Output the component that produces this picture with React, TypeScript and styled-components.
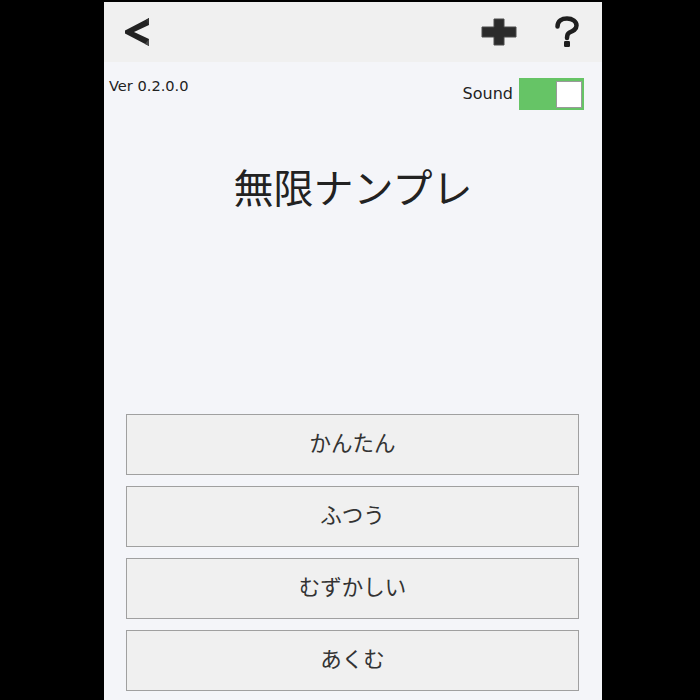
import React, { useState } from "react";
import styled, { createGlobalStyle } from "styled-components";

const Global = createGlobalStyle`
  html, body { margin: 0; padding: 0; background: #000; }
  body { font-family: "DejaVu Sans", "Noto Sans CJK JP", sans-serif; }
`;

const Screen = styled.div`
  width: 700px;
  height: 700px;
  background: #000;
  display: flex;
  justify-content: center;
  padding-top: 2px;
  box-sizing: border-box;
  overflow: hidden;
`;

const Column = styled.div`
  width: 498px;
  background: #f4f5f9;
  display: flex;
  flex-direction: column;
  margin-left: 6px;
`;

const Header = styled.header`
  height: 60px;
  background: #f0f0f0;
  display: flex;
  align-items: center;
  padding: 0 22px 0 20px;
`;

const IconButton = styled.button<{ $gap?: number }>`
  border: none;
  background: transparent;
  padding: 0;
  margin-right: ${(p) => p.$gap ?? 0}px;
  display: flex;
  align-items: center;
  justify-content: center;
  cursor: pointer;
`;

const Spacer = styled.div`
  flex: 1;
`;

const TopRow = styled.div`
  display: flex;
  justify-content: space-between;
  align-items: flex-start;
  padding: 13px 18px 0 5px;
`;

const Version = styled.div`
  font-family: "DejaVu Sans", sans-serif;
  font-size: 14.6px;
  color: #222;
  margin-top: 2px;
`;

const SoundBox = styled.div`
  display: flex;
  align-items: center;
  gap: 6px;
  margin-top: 3px;
`;

const SoundLabel = styled.span`
  font-family: "DejaVu Sans", sans-serif;
  font-size: 16px;
  color: #222;
  margin-top: -2px;
`;

const Toggle = styled.div<{ $on: boolean }>`
  width: 65px;
  height: 32px;
  box-sizing: border-box;
  background: ${(p) => (p.$on ? "#66c466" : "#ccc")};
  display: flex;
  align-items: center;
  justify-content: ${(p) => (p.$on ? "flex-end" : "flex-start")};
  padding: 3px 2px;
  cursor: pointer;
`;

const Knob = styled.div`
  width: 26px;
  height: 27px;
  box-sizing: border-box;
  background: #fff;
  border: 1px solid #9a9a9a;
`;

const Title = styled.h1`
  margin: 51px 0 0 0;
  text-align: center;
  font-family: "Noto Sans CJK JP", sans-serif;
  font-weight: 400;
  font-size: 40px;
  line-height: 50px;
  color: #222;
`;

const Menu = styled.div`
  margin-top: auto;
  display: flex;
  flex-direction: column;
  gap: 11px;
  padding: 0 23px 9px 22px;
`;

const MenuButton = styled.button`
  height: 61px;
  width: 100%;
  box-sizing: border-box;
  background: #f0f0f0;
  border: 1px solid #a0a0a0;
  padding: 0 0 6px 0;
  font-family: "Noto Sans CJK JP", sans-serif;
  font-size: 21.5px;
  color: #333;
  cursor: pointer;
`;

const BackIcon = () => (
  <svg width="27" height="30" viewBox="0 0 27 30">
    <polygon points="25,1 25,8 10,15 25,22 25,29 1,16.5 1,13.5" fill="#222" />
    <polygon points="25,22 25,29 21,27" fill="#4a4a4a" />
    <polygon points="25,1 25,8 22,3" fill="#333" />
  </svg>
);

const PlusIcon = () => (
  <svg width="36" height="28" viewBox="0 0 36 28">
    <path
      d="M13 1 H23 V9 H35 V19 H23 V27 H13 V19 H1 V9 H13 Z"
      fill="#2b2b2b"
      stroke="#4a4a4a"
      strokeWidth="1"
      strokeLinejoin="round"
    />
  </svg>
);

const HelpIcon = () => (
  <svg width="26" height="32" viewBox="0 0 26 32">
    <path
      d="M3.5 10.5 C3.5 4.5 8 2.5 13 2.5 C18.5 2.5 22.5 5.5 22.5 9.5 C22.5 13.5 19 15 15.5 16.5 C13.5 17.5 13 19 13 22"
      fill="none"
      stroke="#1e1e1e"
      strokeWidth="4.5"
      strokeLinecap="round"
    />
    <rect x="10" y="25" width="6" height="6" rx="1.2" fill="#1e1e1e" />
  </svg>
);

const levels = ["かんたん", "ふつう", "むずかしい", "あくむ"];

export default function App() {
  const [sound, setSound] = useState(true);
  return (
    <>
      <Global />
      <Screen>
        <Column>
          <Header>
            <IconButton aria-label="back">
              <BackIcon />
            </IconButton>
            <Spacer />
            <IconButton aria-label="add" $gap={37}>
              <PlusIcon />
            </IconButton>
            <IconButton aria-label="help">
              <HelpIcon />
            </IconButton>
          </Header>
          <TopRow>
            <Version>Ver 0.2.0.0</Version>
            <SoundBox>
              <SoundLabel>Sound</SoundLabel>
              <Toggle $on={sound} onClick={() => setSound(!sound)}>
                <Knob />
              </Toggle>
            </SoundBox>
          </TopRow>
          <Title>無限ナンプレ</Title>
          <Menu>
            {levels.map((l) => (
              <MenuButton key={l}>{l}</MenuButton>
            ))}
          </Menu>
        </Column>
      </Screen>
    </>
  );
}
